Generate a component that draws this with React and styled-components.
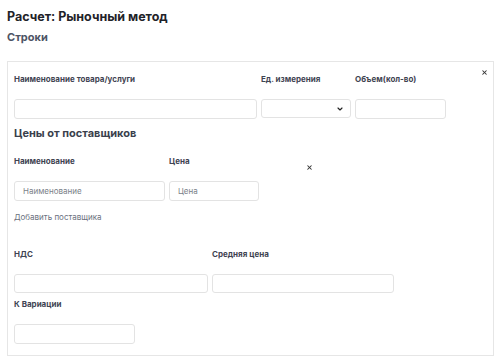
import styled, { createGlobalStyle } from "styled-components"
import { X, ChevronDown } from "lucide-react"

let GlobalStyle = createGlobalStyle`
    body {
        margin: 0;
        background: #fff;
        font-family: Inter, "Noto Sans", sans-serif;
    }
`

let Page = styled.div`
    padding: 9px 7px 6px 7px;
`

let Title = styled.h1`
    margin: 0;
    font-size: 12.5px;
    line-height: 16px;
    font-weight: 700;
    color: #1f2329;
`

let SubTitle = styled.h2`
    margin: 4px 0 0 0;
    font-size: 11px;
    line-height: 16px;
    font-weight: 700;
    color: #4d5465;
`

let Card = styled.div`
    position: relative;
    margin-top: 16px;
    width: 487px;
    box-sizing: border-box;
    border: 1px solid #e6e6e6;
    padding: 12px 6px 11px 6px;
`

let CloseButton = styled.button`
    position: absolute;
    top: ${p => p.$top}px;
    left: ${p => p.$left}px;
    border: none;
    background: none;
    padding: 0;
    display: flex;
    color: #333;
`

let Row = styled.div`
    display: grid;
    grid-template-columns: ${p => p.$cols};
    column-gap: 4px;
    margin-top: ${p => p.$mt || 0}px;
`

let Label = styled.div`
    font-size: 8px;
    line-height: 10px;
    font-weight: 700;
    color: #3f4452;
    margin-bottom: 15px;
    white-space: nowrap;
`

let Input = styled.input`
    display: block;
    width: 100%;
    box-sizing: border-box;
    height: ${p => p.$h || 20}px;
    border: 1px solid #e3e3e3;
    border-radius: 3px;
    padding: 0 8px;
    font-family: inherit;
    font-size: 8px;
    color: #333;
    outline: none;

    &::placeholder {
        color: #7a7f88;
    }
`

let Select = styled.div`
    height: 19px;
    margin-top: 1px;
    box-sizing: border-box;
    border: 1px solid #e3e3e3;
    border-radius: 3px;
    display: flex;
    align-items: center;
    justify-content: flex-end;
    padding-right: 6px;
    color: #222;
`

let SectionTitle = styled.h3`
    margin: 7px 0 0 0;
    font-size: 11px;
    line-height: 14px;
    font-weight: 700;
    color: #3a3f4c;
`

let SupplierRow = styled.div`
    position: relative;
    display: grid;
    grid-template-columns: 151px 90px;
    column-gap: 4px;
    margin-top: 16px;
`

let AddLink = styled.a`
    display: block;
    margin-top: 11px;
    font-size: 8px;
    line-height: 10px;
    color: #6b7180;
    cursor: pointer;
`

let App = () => {
    return (
        <Page>
            <GlobalStyle />
            <Title>Расчет: Рыночный метод</Title>
            <SubTitle>Строки</SubTitle>
            <Card>
                <CloseButton $top={7} $left={473}>
                    <X size={7} strokeWidth={3.5} />
                </CloseButton>
                <Row $cols="243px 90px 91px">
                    <div>
                        <Label>Наименование товара/услуги</Label>
                        <Input />
                    </div>
                    <div>
                        <Label>Ед. измерения</Label>
                        <Select>
                            <ChevronDown size={8} strokeWidth={3.5} />
                        </Select>
                    </div>
                    <div>
                        <Label>Объем(кол-во)</Label>
                        <Input />
                    </div>
                </Row>

                <SectionTitle>Цены от поставщиков</SectionTitle>
                <SupplierRow>
                    <CloseButton $top={8} $left={292}>
                        <X size={7} strokeWidth={3.5} />
                    </CloseButton>
                    <div>
                        <Label>Наименование</Label>
                        <Input placeholder="Наименование" />
                    </div>
                    <div>
                        <Label>Цена</Label>
                        <Input placeholder="Цена" />
                    </div>
                </SupplierRow>
                <AddLink>Добавить поставщика</AddLink>

                <Row $cols="194px 182px" $mt={27}>
                    <div>
                        <Label>НДС</Label>
                        <Input $h={19} />
                    </div>
                    <div>
                        <Label>Средняя цена</Label>
                        <Input $h={19} />
                    </div>
                </Row>
                <Row $cols="121px" $mt={6}>
                    <div>
                        <Label>К Вариации</Label>
                        <Input />
                    </div>
                </Row>
            </Card>
        </Page>
    )
}

export default App
